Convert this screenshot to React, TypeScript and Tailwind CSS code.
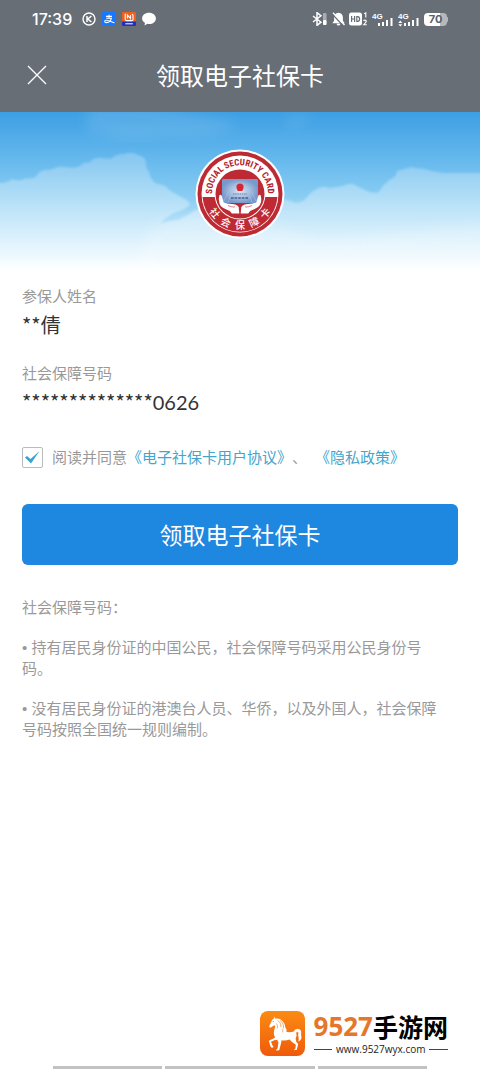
import type { ReactNode } from 'react';

const AppIcons = () => (
  <div className="flex items-center gap-[6px]">
    <svg viewBox="0 0 14 14" className="size-[14px]">
      <circle cx="7" cy="7" r="6" fill="none" stroke="#fff" strokeWidth="1.4" />
      <path
        d="M5 4v6M9.4 4L5.8 7l3.6 3"
        fill="none"
        stroke="#fff"
        strokeWidth="1.5"
      />
    </svg>
    <svg viewBox="0 0 14 14" className="size-[14px]">
      <rect width="14" height="14" rx="1" fill="#1677ff" />
      <path
        d="M4 4.4h6M7 2.8v3.2M4.2 6.2h5.2C8.8 9 6.6 10.6 4.4 10.6c-2.2 0-2.2-2.4-.2-2.4 2.2 0 4.4 1.2 8.3 2.6"
        fill="none"
        stroke="#fff"
        strokeWidth="1.1"
      />
    </svg>
    <svg viewBox="0 0 14 14" className="size-[14px]">
      <rect width="14" height="14" rx="1" fill="#f0601c" />
      <path d="M0 9.6h14V13a1 1 0 0 1-1 1H1a1 1 0 0 1-1-1z" fill="#2530b8" />
      <path
        d="M3.2 1.8v5.4q0 1.4 1.4 1.4h5.2q1.2 0 1.2-1.2V3.6q0-1.4-1.2-1.4M5.4 6.6V3l3 3.6V3"
        fill="none"
        stroke="#fff"
        strokeWidth="1.1"
      />
      <path d="M3.4 11.8h7.4" stroke="#fff" strokeWidth="1" />
    </svg>
    <svg viewBox="0 0 14 14" className="size-[14px]">
      <path
        d="M7 .8c3.9 0 6.9 2.4 6.9 5.6S10.9 12 7 12c-.6 0-1.1 0-1.6-.2L2.6 13.4l.3-2.6C1.2 9.8.1 8.2.1 6.4.1 3.2 3.1.8 7 .8z"
        fill="#fff"
      />
    </svg>
  </div>
);

const Signal = ({ arrows }: { arrows?: boolean }) => (
  <svg viewBox="0 0 22 15" className="h-[15px] w-[22px]" fill="#fff">
    <text
      x="0"
      y="7"
      fontSize="8"
      fontWeight="700"
      fontFamily="Liberation Sans, sans-serif"
    >
      4G
    </text>
    {arrows && <path d="M.3 11l2-2.4 2 2.4zM.3 12.2l2 2.4 2-2.4z" />}
    <path d="M6 11h2v3H6zM10 10h2v4h-2zM14 8h2v6h-2zM18.5 6h2v8h-2z" />
  </svg>
);

const SystemIcons = () => (
  <div className="flex items-center gap-1">
    <svg viewBox="0 0 16 14" className="h-[14px] w-[16px]">
      <path
        d="M1 4l8 6.2-4 3.2V.6l4 3.2L1 10"
        fill="none"
        stroke="#fff"
        strokeWidth="1.5"
      />
      <rect x="11" y="1" width="3.5" height="12" rx="1" fill="#a9aeb4" />
      <rect x="11" y="8" width="3.5" height="5" rx="1" fill="#fff" />
    </svg>
    <svg viewBox="0 0 13 14" className="h-[14px] w-[13px]">
      <path
        d="M6.5 .8q4.4.6 4.4 5v3l1.8 2.4H.3l1.8-2.4v-3q0-4.400 4.400-5zM4.600 11.800h3.800c-.2 1.200-.8 1.800-1.900 1.800s-1.700-.6-1.900-1.800z"
        fill="#fff"
      />
      <path d="M0 1.8L11.5 14" stroke="#676e76" strokeWidth="1.4" />
      <path d="M1 .8L12.5 13" stroke="#fff" strokeWidth="1.3" />
    </svg>
    <svg viewBox="0 0 19 14" className="h-[14px] w-[19px]">
      <rect width="13" height="13" y=".5" rx="2.5" fill="#fff" />
      <path
        d="M2.6 4v6M5.6 4v6M2.6 7h3M7.8 4.6v4.8h.8q2 0 2-2.4t-2-2.4z"
        fill="none"
        stroke="#676e76"
        strokeWidth="1.2"
      />
      <path
        d="M15.2 1.8l1.6-.9v4.7M14.6 9q.2-.9 1.4-.9 1.3 0 1.3 1.1 0 .8-2.7 3.6h3.2"
        fill="none"
        stroke="#fff"
        strokeWidth="1.1"
      />
    </svg>
    <Signal />
    <Signal arrows />
    <div className="flex items-center">
      <div className="flex h-[13px] w-[23px] items-center justify-center rounded-[4px] bg-linear-to-r from-white from-70% to-[#b5b8bc] to-70% text-[11px] font-bold text-[#5b6169]">
        70
      </div>
      <div className="h-[5px] w-px rounded-r bg-[#b5b8bc]" />
    </div>
  </div>
);

const Clouds = () => (
  <svg
    viewBox="0 0 480 163"
    preserveAspectRatio="none"
    className="absolute inset-0 size-full"
  >
    <defs>
      <linearGradient id="sky" x1="0" y1="0" x2="0" y2="1">
        <stop offset="0" stopColor="#3d9fe3" />
        <stop offset=".25" stopColor="#60b5ec" />
        <stop offset=".5" stopColor="#86cbf2" />
        <stop offset=".75" stopColor="#b9e3f9" />
        <stop offset=".92" stopColor="#e6f6fe" />
        <stop offset="1" stopColor="#fff" />
      </linearGradient>
      <linearGradient
        id="cloud"
        gradientUnits="userSpaceOnUse"
        x1="0"
        y1="50"
        x2="0"
        y2="163"
      >
        <stop offset="0" stopColor="#fff" stopOpacity=".24" />
        <stop offset=".5" stopColor="#fff" stopOpacity=".38" />
        <stop offset=".85" stopColor="#fff" stopOpacity=".5" />
        <stop offset="1" stopColor="#fff" />
      </linearGradient>
      <filter id="soft">
        <feGaussianBlur stdDeviation="1" />
      </filter>
      <filter id="wisp">
        <feGaussianBlur stdDeviation="6" />
      </filter>
    </defs>
    <rect width="480" height="163" fill="url(#sky)" />
    <path
      d="M88 -8q50-4 90 6l60 12q-20 18-70 14-50 8-82-8zM285 6l30-5-22 16z"
      fill="#fff"
      opacity=".1"
      filter="url(#wisp)"
    />
    {/* one outline for both banks, so nothing doubles up where they meet */}
    <path
      d="M-10 70q16 3 22-3 8 3 14-1 8 2 12-4 4-5 12-4 8-5 16-3 8 2 14-1 4-5 9-3 5-6 13-5 8 1 10 0 4-4 12-4 8-3 14 1 6 1 8 6-1 6 3 11 1 8 8 12 8 0 12 6l12 7q8 3 9 8-8 6-16 8-8 4-14 11 10-4 18-4 8-4 18-10 30-16 50-2 16-10 32-8 8-2 18 3 8-1 11-6 5-6 10-8 6-4 12-1 8-1 14-2 6-4 12-1 6 3 12 6 6 3 12 1 4-7 10-12 8-3 8-9 8-2 14-4 8 2 14 2 8 3 20 4H520V180H-10z"
      fill="url(#cloud)"
      filter="url(#soft)"
    />
    <path
      d="M142 170q-4-40 10-54 30-16 70-18l100 30 200-20v70z"
      fill="#fff"
      opacity=".2"
      filter="url(#wisp)"
    />
  </svg>
);

const Emblem = () => (
  <svg viewBox="0 0 90 90" className="relative size-[90px]">
    <defs>
      <path id="arc-top" d="M17.6 50A28 28 0 1 1 72.4 50" />
      <radialGradient id="card">
        <stop offset="0" stopColor="#dbe9f7" />
        <stop offset="1" stopColor="#7899cb" />
      </radialGradient>
    </defs>
    <circle cx="45" cy="45" r="44.5" fill="#fff" />
    <circle cx="45" cy="45" r="42.5" fill="#bd2a33" />
    <circle cx="45" cy="45" r="38.5" fill="#fff" />
    <path d="M7.5 48a37.6 37.6 0 0 0 75 0z" fill="#bd2a33" />
    <circle cx="45" cy="45" r="25.5" fill="#fff" />
    <circle cx="45" cy="45" r="24.5" fill="#bd2a33" />
    <text
      fontSize="9"
      fontWeight="700"
      fontFamily="Roboto Condensed, Roboto, sans-serif"
      fill="#b3242e"
    >
      <textPath href="#arc-top" startOffset="50%" textAnchor="middle">
        SOCIAL SECURITY CARD
      </textPath>
    </text>
    <g
      fontSize="10"
      fontWeight="500"
      fontFamily="Noto Sans CJK SC, sans-serif"
      fill="#fff"
      textAnchor="middle"
    >
      <text transform="translate(20 64) rotate(50)" y="4">社</text>
      <text transform="translate(31 73) rotate(26)" y="4">会</text>
      <text transform="translate(45 76)" y="4">保</text>
      <text transform="translate(59 73) rotate(-26)" y="4">障</text>
      <text transform="translate(70 64) rotate(-50)" y="4">卡</text>
    </g>
    <path d="M28 30h34l1 1v20l-1 3H28l-1-3V31z" fill="url(#card)" />
    <path
      d="M29 52q7-18 16-18t16 18M33 53q5-15 12-15t12 15"
      fill="none"
      stroke="#a9c4e4"
      strokeWidth=".6"
    />
    <circle cx="45" cy="38" r="3.6" fill="#d92632" />
    <path d="M42.5 40h5v2h-5z" fill="#d92632" />
    <path d="M38 45h14" stroke="#687ca6" strokeWidth="1" strokeDasharray="1.5 .7" />
    <path d="M36 49h18" stroke="#4b5f91" strokeWidth="1.6" strokeDasharray="2.6 1" />
    <path
      id="hand"
      d="M24.5 46q2-1 2.6 2l1.6 5.4q3 1.200 8 1.600 5 .2 7 3l.6 6.400h-7.500q-1.300-3-5.300-4-6-1.800-7-5.800-1.600-4 0-8.600z"
      fill="#fff"
    />
    <use href="#hand" transform="matrix(-1 0 0 1 90 0)" />
    <path
      d="M33 56.5q3.5 1.8 7 1.5M57 56.5q-3.5 1.8-7 1.5"
      fill="none"
      stroke="#bd2a33"
      strokeWidth=".6"
    />
  </svg>
);

const Horse = () => (
  <svg viewBox="0 0 45 45" className="size-[45px]">
    <defs>
      <linearGradient id="horse-bg" x1="0" y1="0" x2="0" y2="1">
        <stop offset="0" stopColor="#fb8b13" />
        <stop offset="1" stopColor="#f05a0b" />
      </linearGradient>
    </defs>
    <rect width="45" height="45" rx="8" fill="url(#horse-bg)" />
    <path
      d="M14 5.5l1.4 2.2q4.6-.7 7 2.3 2.8 2.6 3 6.5 1.8 2 .8 4.3 3.4 1 7.6-.2 1-3 4-2.8 3.6.4 3.4 4.2-.4 2.4.2 3.6.6 1.8-.6 3-.6 1.8-2.8 1.8 1.2-2 .6-4-.8-2.6-.2-4.8-1.2-1.4-2.2 0 1 3.6-.6 6l.8 3.4 1.8 2-1.4 5.8-2.8.4q.2-1.2 1.4-1.8l.4-3.6-3.8-2.8-2.4-2.6q-4.2 1.6-8 .8l-.6 3.2-1.8 6.8-3.2.4q.2-1.4 1.6-2l.8-6.4-1.2-2.4-3 .4-3.2 1.6 1.2 3 1.4 2.4-2 .6-1.2-1.6-1.6-5.4 5.2-2.6 1-.8q-2-3.6-.8-7.4 1-2.6 1-4.8l-2.2.8-2 1.6q-1.6.4-1.8-1.6l1.8-3.6q.6-3 3-4.2z"
      fill="#fff"
    />
    <path
      d="M17.5 9.5q3.8 2 3.3 6.5M20 9.5q4 2.5 3.4 8M16.5 12.5q1.7 2 .8 5M22 18q1.5 1.5.6 3.4"
      fill="none"
      stroke="#f5760f"
      strokeWidth=".6"
    />
    <circle cx="13.2" cy="10.6" r=".6" fill="#f5760f" />
  </svg>
);

const Field = ({ label, children }: { label: string; children: ReactNode }) => (
  <div className="mb-[19px]">
    <dt className="text-[15px] leading-[26px] text-[#999]">{label}</dt>
    <dd className="text-[20px] leading-[32px] text-[#333]">{children}</dd>
  </div>
);

const notes = [
  '• 持有居民身份证的中国公民，社会保障号码采用公民身份号码。',
  '• 没有居民身份证的港澳台人员、华侨，以及外国人，社会保障号码按照全国统一规则编制。',
];

const App = () => {
  return (
    <div
      lang="zh-CN"
      className="flex min-h-screen flex-col bg-white font-['Noto_Sans_CJK_SC',sans-serif]"
    >
      <header className="bg-[#676e76] text-white">
        <div className="flex h-[38px] items-center justify-between pr-8 pl-8 font-['Inter',sans-serif]">
          <div className="flex items-center gap-[10px]">
            <span className="text-[16px] font-medium">17:39</span>
            <AppIcons />
          </div>
          <SystemIcons />
        </div>
        <div className="grid h-[74px] grid-cols-[74px_1fr_74px] items-center">
          <button type="button" aria-label="关闭" className="flex justify-center">
            <svg viewBox="0 0 20 20" className="size-5">
              <path d="M1 1l18 18M19 1L1 19" stroke="#fff" strokeWidth="1.3" />
            </svg>
          </button>
          <h1 className="text-center text-[24px]">领取电子社保卡</h1>
        </div>
      </header>

      <div className="relative flex h-[163px] items-center justify-center">
        <Clouds />
        <Emblem />
      </div>

      <main className="px-[22px] pt-2">
        <dl>
          <Field label="参保人姓名">**倩</Field>
          <Field label="社会保障号码">
            **************<span className="font-['Lato']">0626</span>
          </Field>
        </dl>

        <div className="mt-7 flex h-[22px] items-center text-[15px] text-[#999]">
          <span className="relative mr-[9px] flex size-[21px]">
            <input
              id="agree"
              type="checkbox"
              defaultChecked
              className="peer size-[21px] appearance-none rounded-[2px] border border-[#bbb]"
            />
            <svg
              viewBox="0 0 21 21"
              className="pointer-events-none absolute inset-0 hidden peer-checked:block"
            >
              <path d="M3 10.5l2-1.5 3.5 3L17.5 4 9 16.5z" fill="#3ba3cf" />
            </svg>
          </span>
          <label htmlFor="agree">阅读并同意</label>
          <a href="#agreement" className="text-[#44a5cb]">
            《电子社保卡用户协议》
          </a>
          <span className="mr-2">、</span>
          <a href="#privacy" className="text-[#44a5cb]">
            《隐私政策》
          </a>
        </div>

        <button
          type="button"
          className="mt-9 h-[61px] w-full rounded-md bg-[#1e87df] text-[23px] text-white"
        >
          领取电子社保卡
        </button>

        <section className="mt-8 space-y-[19px] pr-4 font-['Liberation_Sans','Noto_Sans_CJK_SC',sans-serif] text-[15px] leading-[21px] text-[#999]">
          <p>社会保障号码：</p>
          {notes.map((note) => (
            <p key={note}>{note}</p>
          ))}
        </section>
      </main>

      <footer className="mt-auto">
        <div className="flex items-center justify-end gap-[9px] pr-8">
          <Horse />
          <div>
            <div className="flex items-center leading-[32px] font-bold">
              <span className="font-['Open_Sans',sans-serif] text-[26px] text-[#e6762b]">
                9527
              </span>
              <span className="text-[25px] text-black">手游网</span>
            </div>
            <div className="flex items-center gap-1 font-['Open_Sans',sans-serif] text-[10px] leading-[14px] text-[#222]">
              <i className="h-px flex-1 bg-[#444]" />
              www.9527wyx.com
              <i className="h-px flex-1 bg-[#444]" />
            </div>
          </div>
        </div>
        <div className="mx-auto mt-[10px] flex h-[4px] w-[78%] gap-[3px]">
          <i className="h-[3px] w-[109px] bg-[#c2c2c2]" />
          <i className="h-[3px] flex-1 bg-[#c2c2c2]" />
          <i className="h-[3px] w-[109px] bg-[#c2c2c2]" />
        </div>
      </footer>
    </div>
  );
};

export default App;
